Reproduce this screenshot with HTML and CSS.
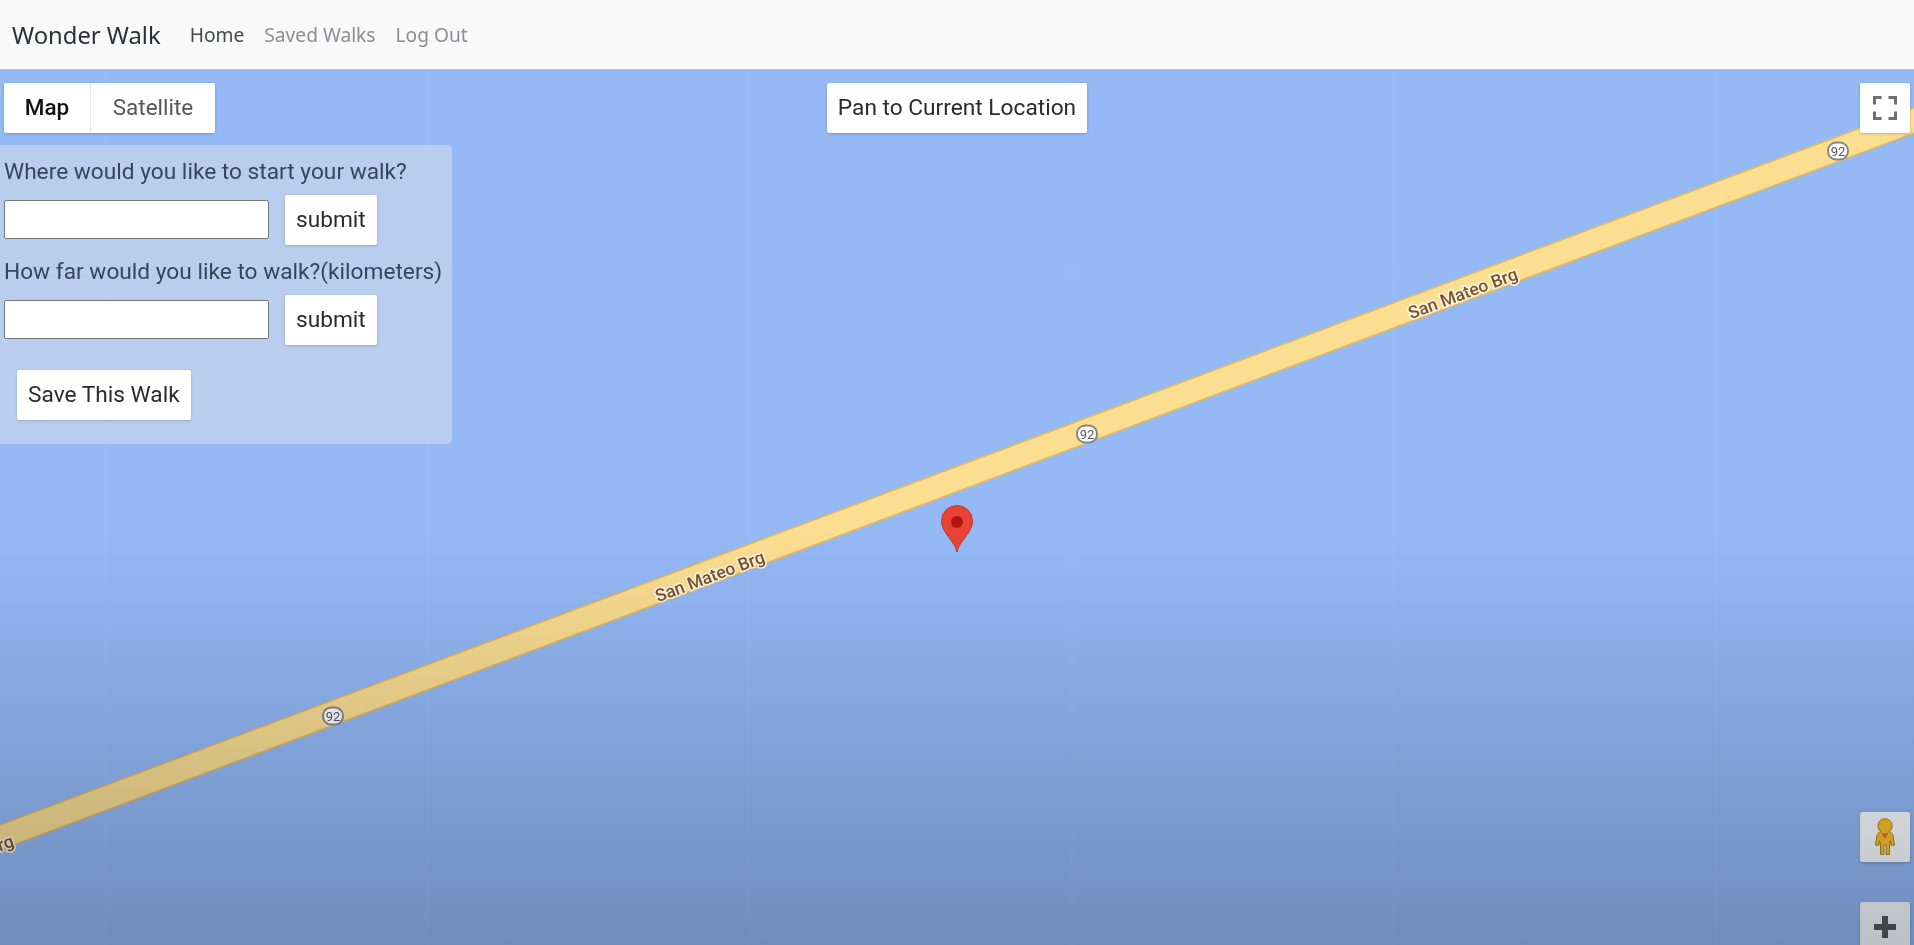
FILE: index.html
```html
<!DOCTYPE html>
<html lang="en">
<head>
<meta charset="UTF-8">
<title>Wonder Walk</title>
<link rel="stylesheet" href="styles.css">
</head>
<body>

<nav class="navbar">
  <a class="brand">Wonder Walk</a>
  <a class="nav-link active">Home</a>
  <a class="nav-link">Saved Walks</a>
  <a class="nav-link">Log Out</a>
</nav>

<div class="map">
  <svg class="map-canvas" viewBox="0 70 1914 875" width="1914" height="875">
    <!-- tile seams -->
    <g class="seams">
      <line x1="106" y1="70" x2="106" y2="945"/>
      <line x1="427" y1="70" x2="427" y2="945"/>
      <line x1="749" y1="70" x2="749" y2="945"/>
      <line x1="1072" y1="70" x2="1072" y2="945"/>
      <line x1="1394" y1="70" x2="1394" y2="945"/>
      <line x1="1716" y1="70" x2="1716" y2="945"/>
      <line x1="0" y1="272" x2="1914" y2="272"/>
      <line x1="0" y1="597" x2="1914" y2="597"/>
    </g>

    <!-- road -->
    <line class="road-edge" x1="-20" y1="845" x2="1934" y2="113"/>
    <line class="road" x1="-20" y1="845" x2="1934" y2="113"/>

    <text class="road-label" transform="translate(712 582) rotate(-20.5)">San Mateo Brg</text>
    <text class="road-label" transform="translate(1465 299) rotate(-20.5)">San Mateo Brg</text>
    <text class="road-label" transform="translate(-39 866) rotate(-20.5)">San Mateo Brg</text>

    <g class="shield" transform="translate(333 716)">
      <rect x="-10" y="-8.500" width="20" height="17" rx="8"/>
      <text y="4.500">92</text>
    </g>
    <g class="shield" transform="translate(1087 434)">
      <rect x="-10" y="-8.500" width="20" height="17" rx="8"/>
      <text y="4.500">92</text>
    </g>
    <g class="shield" transform="translate(1838 151)">
      <rect x="-10" y="-8.500" width="20" height="17" rx="8"/>
      <text y="4.500">92</text>
    </g>

    <!-- marker -->
    <path class="pin" d="M957 552c-2-11-15.500-19-15.500-31a15.500 15.500 0 0 1 31 0c0 12-13.500 20-15.500 31z"/>
    <circle class="pin-dot" cx="957" cy="522" r="6"/>
  </svg>

  <div class="map-type">
    <div class="map-type-btn selected">Map</div>
    <div class="map-type-btn">Satellite</div>
  </div>

  <div class="walk-panel">
    <label class="walk-label">Where would you like to start your walk?</label>
    <div class="walk-row">
      <input class="walk-input" type="text">
      <button class="ctl-btn">submit</button>
    </div>
    <label class="walk-label">How far would you like to walk?(kilometers)</label>
    <div class="walk-row">
      <input class="walk-input" type="text">
      <button class="ctl-btn">submit</button>
    </div>
    <button class="ctl-btn save-btn">Save This Walk</button>
  </div>

  <button class="ctl-btn pan-btn">Pan to Current Location</button>

  <div class="ctl-square fullscreen">
    <svg width="24" height="24" viewBox="0 0 24 24">
      <path class="fs-icon" d="M1.500 8.500V1.500H8.500M15.500 1.500H22.500V8.500M22.500 15.500V22.500H15.500M8.500 22.500H1.500V15.500"/>
    </svg>
  </div>

  <div class="ctl-square pegman">
    <svg width="24" height="38" viewBox="0 0 24 38">
      <path class="peg-body" d="M12 .8a7.200 7.200 0 0 0-4.200 13c-2.300.7-3.500 1.900-3.900 4.100L2.500 27l3.300.6.900-5 .8 3V36.500h3.400V27h2.200v9.500h3.400V25.600l.8-3 .9 5 3.300-.6-1.400-9.100c-.4-2.200-1.600-3.400-3.900-4.100A7.200 7.200 0 0 0 12 .8z"/>
      <path class="peg-collar" d="M8 14.500l4 6 4-6-4 1.300z"/>
    </svg>
  </div>

  <div class="ctl-square zoom-in">
    <svg width="24" height="24" viewBox="0 0 24 24">
      <path class="zoom-icon" d="M12 1V23M1 12H23"/>
    </svg>
  </div>
</div>

<div class="video-fade"></div>

</body>
</html>
```

FILE: styles.css
```css
html, body {
    margin: 0;
    height: 100%;
    overflow: hidden;
}
body {
    position: relative;
    font-family: Roboto, Arial, sans-serif;
    background-color: #94b9f5;
    filter: blur(0.5px);
}

/* navbar */
.navbar {
    height: 69px;
    box-sizing: border-box;
    display: flex;
    align-items: center;
    padding: 0 12px;
    background-color: #f9f9fa;
    font-family: "Noto Sans", Arial, sans-serif;
}
.brand {
    font-size: 23.800px;
    color: #2c3036;
    margin-right: 19px;
}
.nav-link {
    font-size: 19.200px;
    color: #8b8d90;
    padding: 0 10px;
}
.nav-link.active { color: #45494e; }

/* map */
.map {
    position: relative;
    height: 876px;
    overflow: hidden;
    background-color: #94b9f5;
    border-top: 1px solid #a8c4f2;
    box-sizing: border-box;
}
.map-canvas { display: block; }
.seams line { stroke: #9cbff6; stroke-width: 1; }
.road { stroke: #fcde90; stroke-width: 22; }
.road-edge { stroke: #e8bb55; stroke-width: 25; }
.road-label {
    font-family: Roboto, Arial, sans-serif;
    font-size: 17.500px;
    font-weight: 500;
    text-anchor: middle;
    fill: #7b5128;
    stroke: #fdf6e4;
    stroke-width: 3px;
    paint-order: stroke;
}
.shield rect { fill: #fff; stroke: #85868a; stroke-width: 2; }
.shield text {
    font-family: Roboto, Arial, sans-serif;
    font-size: 13px;
    text-anchor: middle;
    fill: #55575b;
}
.pin { fill: #ea4335; stroke: #c5352a; stroke-width: 1; }
.pin-dot { fill: #b31412; }

/* controls on top of the map */
.map-type {
    position: absolute;
    left: 4px;
    top: 13px;
    display: flex;
    width: 211px;
    height: 50px;
    background-color: #fff;
    border-radius: 2px;
    box-shadow: 0 1px 3px rgba(0,0,0,0.2);
    font-size: 22.500px;
}
.map-type-btn {
    flex: 1;
    display: flex;
    align-items: center;
    justify-content: center;
    padding-bottom: 2px;
    box-sizing: border-box;
    color: #565656;
}
.map-type-btn.selected {
    flex: none;
    width: 87px;
    color: #111;
    font-weight: 500;
    border-right: 1px solid #e6e6e6;
}

.walk-panel {
    position: absolute;
    left: 0;
    top: 75px;
    width: 452px;
    height: 299px;
    box-sizing: border-box;
    padding: 11px 4px 0;
    background-color: rgba(240,238,230,0.4);
    border-radius: 0 5px 5px 0;
    display: flex;
    flex-direction: column;
}
.walk-label {
    font-size: 22.700px;
    line-height: 32px;
    color: #35465c;
    white-space: nowrap;
}
.walk-row {
    display: flex;
    align-items: center;
    gap: 16px;
    margin: 7px 0 11px;
}
.walk-input {
    width: 265px;
    height: 39px;
    margin-bottom: 1px;
    box-sizing: border-box;
    border: 1px solid #777;
    border-radius: 2px;
    background-color: #fff;
}
.ctl-btn {
    height: 50px;
    padding: 0 11px 2px;
    border: none;
    border-radius: 2px;
    background-color: #fff;
    box-shadow: 0 1px 3px rgba(0,0,0,0.2);
    font-family: Roboto, Arial, sans-serif;
    font-size: 22.700px;
    color: #2b2b2b;
}
.save-btn {
    align-self: flex-start;
    margin: 14px 0 0 13px;
}
.pan-btn {
    position: absolute;
    left: 827px;
    top: 13px;
    width: 260px;
    padding: 0 0 2px;
}
.ctl-square {
    position: absolute;
    left: 1860px;
    width: 50px;
    height: 50px;
    display: flex;
    align-items: center;
    justify-content: center;
    background-color: #fff;
    border-radius: 2px;
    box-shadow: 0 1px 3px rgba(0,0,0,0.2);
}
.fullscreen { top: 13px; }
.pegman { top: 742px; }
.zoom-in { top: 832px; }
.fs-icon { fill: none; stroke: #707070; stroke-width: 3; }
.zoom-icon { fill: none; stroke: #555; stroke-width: 6; }
.peg-body { fill: #ffc21f; stroke: #a88420; stroke-width: 1; }
.peg-collar { fill: #ec6a20; }

/* the screen recording darkens toward the bottom */
.video-fade {
    position: absolute;
    left: 0;
    right: 0;
    top: 530px;
    bottom: 0;
    background: linear-gradient(to bottom, rgba(10,20,40,0), rgba(10,20,40,0.27));
    pointer-events: none;
}
```
